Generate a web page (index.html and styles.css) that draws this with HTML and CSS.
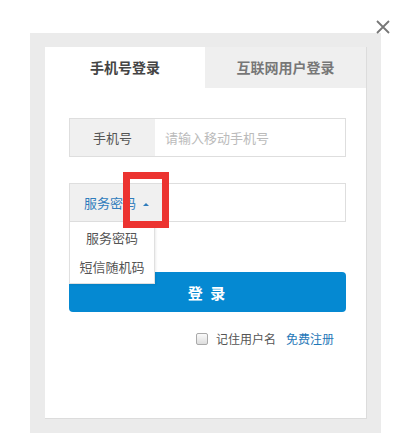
FILE: index.html
```html
<!DOCTYPE html>
<html lang="zh-CN">
<head>
  <meta charset="UTF-8" />
  <title>登录</title>
  <link rel="stylesheet" href="styles.css">
</head>
<body>
  <svg class="close" width="14" height="14" viewBox="0 0 14 14">
    <path d="M1 1 L13 13 M13 1 L1 13" stroke="#777" stroke-width="1.8" fill="none" />
  </svg>

  <div class="dialog">
    <div class="panel">
      <div class="tabs">
        <div class="tab active">手机号登录</div>
        <div class="tab">互联网用户登录</div>
      </div>

      <div class="form">
        <div class="row">
          <div class="label">手机号</div>
          <input class="field" type="text" placeholder="请输入移动手机号" />
        </div>

        <div class="row row-pwd">
          <div class="label label-select">服务密码 <span class="caret"></span></div>
          <input class="field" type="password" />
          <ul class="menu">
            <li>服务密码</li>
            <li>短信随机码</li>
          </ul>
          <span class="mark"></span>
        </div>

        <button class="submit">登 录</button>

        <div class="extra">
          <label class="remember"><span class="box"></span>记住用户名</label>
          <a class="reg" href="#">免费注册</a>
        </div>
      </div>
    </div>
  </div>
</body>
</html>
```

FILE: styles.css
```css
body {
  margin: 0;
  background: #fff;
  font-family: "Noto Sans CJK SC", "Liberation Sans", sans-serif;
  position: relative;
  width: 405px;
  height: 444px;
}
.close {
  position: absolute;
  left: 376px;
  top: 20px;
}
.dialog {
  margin: 33px 0 0 30px;
  width: 351px;
  height: 400px;
  box-sizing: border-box;
  background: #ebebeb;
  padding: 14px 14px 14px 15px;
}
.panel {
  background: #fff;
  height: 372px;
  border-right: 1px solid #dcdcdc;
  border-bottom: 1px solid #dcdcdc;
  box-sizing: border-box;
}
.tabs {
  display: flex;
  height: 41px;
}
.tab {
  width: 161px;
  line-height: 41px;
  text-align: center;
  font-size: 14px;
  font-weight: bold;
  color: #777;
  background: #efefef;
}
.tab.active {
  width: 160px;
  background: #fff;
  color: #444;
}
.form {
  width: 277px;
  margin: 30px 0 0 24px;
}
.row {
  position: relative;
  display: flex;
  height: 39px;
  border: 1px solid #dedede;
  box-sizing: border-box;
}
.row-pwd {
  margin-top: 26px;
}
.label {
  width: 85px;
  background: #f0f0f0;
  font-size: 13px;
  color: #555;
  text-align: center;
  line-height: 37px;
}
.label-select {
  width: 92px;
  text-align: left;
  padding-left: 14px;
  box-sizing: border-box;
  color: #2f7cbc;
}
.caret {
  display: inline-block;
  margin-left: 4px;
  vertical-align: middle;
  width: 0;
  height: 0;
  border-left: 3px solid transparent;
  border-right: 3px solid transparent;
  border-bottom: 3px solid #2f7cbc;
}
.field {
  flex: 1;
  border: 0;
  outline: 0;
  padding: 0 10px;
  font-family: inherit;
  font-size: 13px;
  color: #333;
}
.field::placeholder {
  color: #bbb;
}
.menu {
  position: absolute;
  left: -1px;
  top: 38px;
  width: 86px;
  margin: 0;
  padding: 1px 0 2px;
  list-style: none;
  background: #fff;
  border: 1px solid #e0e0e0;
  border-top: 0;
  box-sizing: border-box;
  box-shadow: 1px 1px 2px rgba(0, 0, 0, 0.08);
  z-index: 2;
}
.menu li {
  height: 29px;
  line-height: 29px;
  text-align: center;
  font-size: 13px;
  color: #555;
}
.mark {
  position: absolute;
  left: 53px;
  top: -12px;
  width: 46px;
  height: 56px;
  box-sizing: border-box;
  border: 7px solid #ec3330;
  z-index: 3;
}
.submit {
  display: block;
  width: 100%;
  height: 40px;
  margin-top: 50px;
  border: 0;
  border-radius: 4px;
  background: #0589d2;
  color: #fff;
  font-family: inherit;
  font-size: 15px;
  font-weight: bold;
  letter-spacing: 2px;
}
.extra {
  display: flex;
  justify-content: flex-end;
  align-items: center;
  gap: 10px;
  margin-top: 18px;
  padding-right: 12px;
  font-size: 12px;
}
.remember {
  display: flex;
  align-items: center;
  color: #555;
}
.box {
  width: 10px;
  height: 10px;
  margin-right: 8px;
  border: 1px solid #aaa;
  border-radius: 2px;
  background: linear-gradient(#fafafa, #ddd);
}
.reg {
  color: #1f78b8;
  text-decoration: none;
}
```
